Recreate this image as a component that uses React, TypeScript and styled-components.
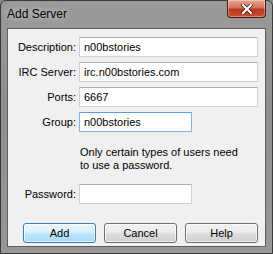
import React from "react";
import styled, { createGlobalStyle } from "styled-components";

const GlobalStyle = createGlobalStyle`
  html, body {
    margin: 0;
    padding: 0;
    background: #8c8c8c;
  }
`;

const Window = styled.div`
  width: 273px;
  height: 254px;
  box-sizing: border-box;
  display: flex;
  flex-direction: column;
  background: linear-gradient(180deg, #9a9a9a 0%, #8e8e8e 40%, #979797 100%);
  border: 1px solid #3a3a3a;
  border-radius: 6px 6px 0 0;
  font-family: "Liberation Sans", Arial, sans-serif;
  padding: 0 6px 6px 6px;
`;

const TitleBar = styled.div`
  height: 27px;
  display: flex;
  align-items: flex-start;
  justify-content: space-between;
`;

const Title = styled.span`
  font-size: 12px;
  color: #000;
  margin-top: 6px;
  text-shadow: 0 0 6px rgba(255, 255, 255, 0.8);
`;

const CloseButton = styled.div`
  width: 39px;
  height: 18px;
  margin-top: -1px;
  box-sizing: border-box;
  border: 1px solid #4d1a14;
  border-top: none;
  border-radius: 0 0 4px 4px;
  background: linear-gradient(180deg, #e8a493 0%, #d4725c 45%, #b83a21 55%, #c9502f 100%);
  display: flex;
  align-items: center;
  justify-content: center;
  box-shadow: inset 0 0 0 1px rgba(255, 255, 255, 0.35);
`;

const Client = styled.div`
  flex: 1;
  background: #f0f0f0;
  border: 1px solid #5e5e5e;
  padding: 8px 0 0 0;
  display: flex;
  flex-direction: column;
`;

const Form = styled.div`
  display: grid;
  grid-template-columns: 68px 1fr;
  column-gap: 3px;
  row-gap: 5px;
  align-items: center;
`;

const Label = styled.label`
  font-size: 11px;
  color: #000;
  text-align: right;
`;

const Field = styled.div<{ $width: number; $focused?: boolean }>`
  width: ${(p) => p.$width}px;
  height: 20px;
  box-sizing: border-box;
  background: #fff;
  border: 1px solid ${(p) => (p.$focused ? "#7eb4ea" : "#cdd0d6")};
  border-top-color: ${(p) => (p.$focused ? "#569de5" : "#abadb3")};
  font-size: 11px;
  color: #000;
  padding: 0 4px;
  display: flex;
  align-items: center;
`;

const Note = styled.p`
  margin: 14px 0 0 72px;
  font-size: 11px;
  line-height: 13px;
  color: #000;
`;

const PasswordRow = styled(Form)`
  margin-top: 12px;
`;

const ButtonRow = styled.div`
  display: flex;
  gap: 8px;
  margin: 19px 0 0 15px;
`;

const Button = styled.div<{ $default?: boolean }>`
  width: 73px;
  height: 20px;
  box-sizing: border-box;
  border: 1px solid ${(p) => (p.$default ? "#3c7fb1" : "#707070")};
  border-radius: 3px;
  background: ${(p) =>
    p.$default
      ? "linear-gradient(180deg, #eaf6fd 0%, #d9f0fc 45%, #bee6fd 55%, #a7d9f5 100%)"
      : "linear-gradient(180deg, #f2f2f2 0%, #ebebeb 45%, #dddddd 55%, #cfcfcf 100%)"};
  box-shadow: inset 0 0 0 1px rgba(255, 255, 255, 0.7);
  font-size: 11px;
  color: #000;
  display: flex;
  align-items: center;
  justify-content: center;
`;

export default function App() {
  return (
    <>
      <GlobalStyle />
      <Window>
        <TitleBar>
          <Title>Add Server</Title>
          <CloseButton>
            <svg width="12" height="10" viewBox="0 0 12 10">
              <path
                d="M2 1 L10 9 M10 1 L2 9"
                stroke="#3a1008"
                strokeWidth="3.6"
                strokeLinecap="square"
              />
              <path
                d="M2 1 L10 9 M10 1 L2 9"
                stroke="#ffffff"
                strokeWidth="2.2"
                strokeLinecap="square"
              />
            </svg>
          </CloseButton>
        </TitleBar>
        <Client>
          <Form>
            <Label>Description:</Label>
            <Field $width={179}>n00bstories</Field>
            <Label>IRC Server:</Label>
            <Field $width={179}>irc.n00bstories.com</Field>
            <Label>Ports:</Label>
            <Field $width={179}>6667</Field>
            <Label>Group:</Label>
            <Field $width={113} $focused>
              n00bstories
            </Field>
          </Form>
          <Note>
            Only certain types of users need
            <br />
            to use a password.
          </Note>
          <PasswordRow>
            <Label>Password:</Label>
            <Field $width={113} />
          </PasswordRow>
          <ButtonRow>
            <Button $default>Add</Button>
            <Button>Cancel</Button>
            <Button>Help</Button>
          </ButtonRow>
        </Client>
      </Window>
    </>
  );
}
